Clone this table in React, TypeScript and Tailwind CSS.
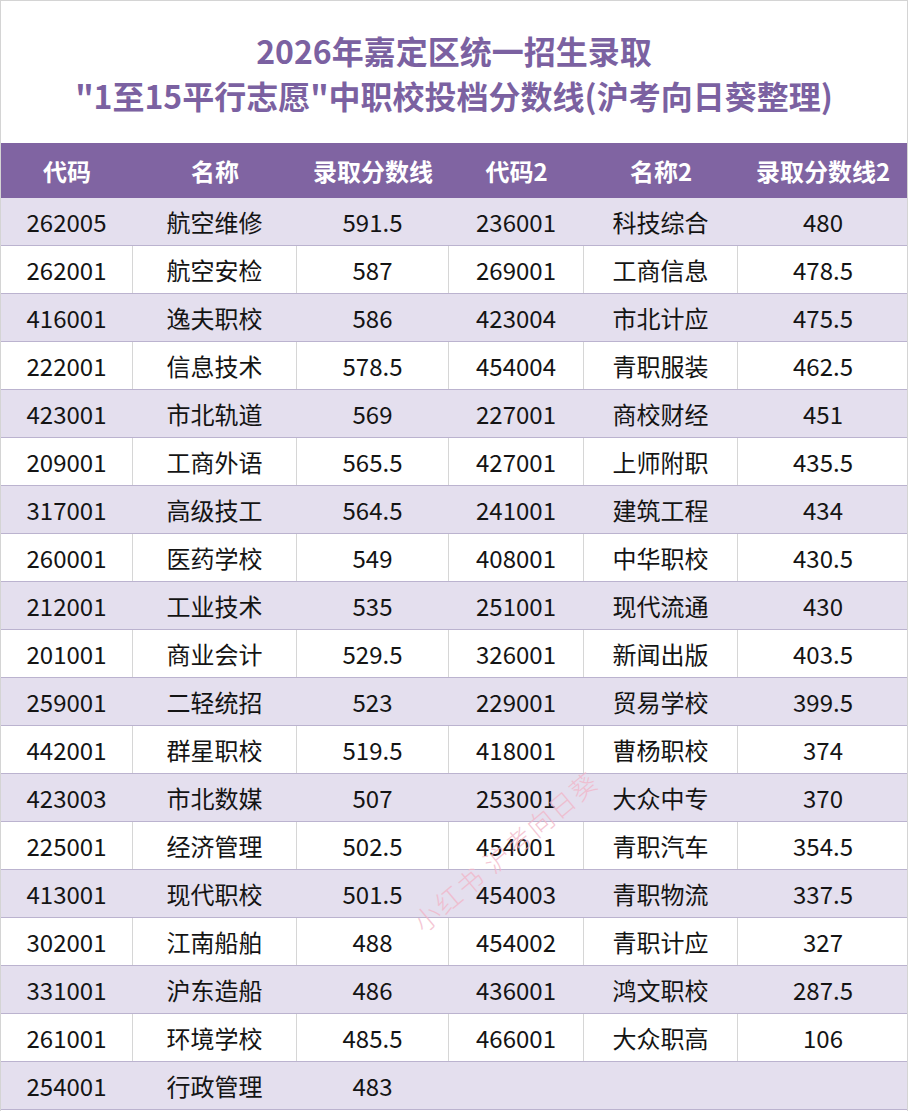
// 2026 嘉定区 中职校投档分数线 table

const left: [string, string, string][] = [
  ['262005', '航空维修', '591.5'],
  ['262001', '航空安检', '587'],
  ['416001', '逸夫职校', '586'],
  ['222001', '信息技术', '578.5'],
  ['423001', '市北轨道', '569'],
  ['209001', '工商外语', '565.5'],
  ['317001', '高级技工', '564.5'],
  ['260001', '医药学校', '549'],
  ['212001', '工业技术', '535'],
  ['201001', '商业会计', '529.5'],
  ['259001', '二轻统招', '523'],
  ['442001', '群星职校', '519.5'],
  ['423003', '市北数媒', '507'],
  ['225001', '经济管理', '502.5'],
  ['413001', '现代职校', '501.5'],
  ['302001', '江南船舶', '488'],
  ['331001', '沪东造船', '486'],
  ['261001', '环境学校', '485.5'],
  ['254001', '行政管理', '483'],
];

const right: [string, string, string][] = [
  ['236001', '科技综合', '480'],
  ['269001', '工商信息', '478.5'],
  ['423004', '市北计应', '475.5'],
  ['454004', '青职服装', '462.5'],
  ['227001', '商校财经', '451'],
  ['427001', '上师附职', '435.5'],
  ['241001', '建筑工程', '434'],
  ['408001', '中华职校', '430.5'],
  ['251001', '现代流通', '430'],
  ['326001', '新闻出版', '403.5'],
  ['229001', '贸易学校', '399.5'],
  ['418001', '曹杨职校', '374'],
  ['253001', '大众中专', '370'],
  ['454001', '青职汽车', '354.5'],
  ['454003', '青职物流', '337.5'],
  ['454002', '青职计应', '327'],
  ['436001', '鸿文职校', '287.5'],
  ['466001', '大众职高', '106'],
];

const headers = ['代码', '名称', '录取分数线', '代码2', '名称2', '录取分数线2'];
const cols = 'grid grid-cols-[132px_164px_152px_135px_154px_170px]';

export default function App() {
  return (
    <div
      className="relative w-[908px] h-[1111px] bg-white border-l border-t border-r border-[#d4d4d4] overflow-hidden"
      style={{ fontFamily: '"Noto Sans CJK SC", "Noto Sans", sans-serif' }}
    >
      <div className="h-[142px] flex flex-col items-center justify-center pt-[2px] text-[#7b61a1] font-bold text-[32px] leading-[45px]">
        <div>2026年嘉定区统一招生录取</div>
        <div>"1至15平行志愿"中职校投档分数线(沪考向日葵整理)</div>
      </div>

      <div className={`${cols} h-[55px] bg-[#8064a2] text-white font-bold text-[24px]`}>
        {headers.map((h) => (
          <div key={h} className="flex items-center justify-center">
            {h}
          </div>
        ))}
      </div>

      {left.map((l, i) => {
        const r = right[i];
        const shaded = i % 2 === 0;
        const cells = [...l, ...(r ?? ['', '', ''])];
        return (
          <div
            key={l[0]}
            className={`${cols} h-[48px] border-b border-[#bbb3cf] text-[24px] text-[#141414] ${
              shaded ? 'bg-[#e4dfee]' : 'bg-white'
            }`}
          >
            {cells.map((c, j) => (
              <div
                key={j}
                className={`flex items-center justify-center ${
                  j < 5 ? (shaded ? 'border-r border-[#e4dfee]' : 'border-r border-[#d6d6d6]') : ''
                }`}
              >
                {c}
              </div>
            ))}
          </div>
        );
      })}

      {/* watermark */}
      <div className="absolute left-[388px] top-[830px] -rotate-[40deg] text-[26px] font-light tracking-[2px] text-[#f2b4c6] opacity-75 pointer-events-none whitespace-nowrap">
        小红书 沪考向日葵
      </div>
    </div>
  );
}
